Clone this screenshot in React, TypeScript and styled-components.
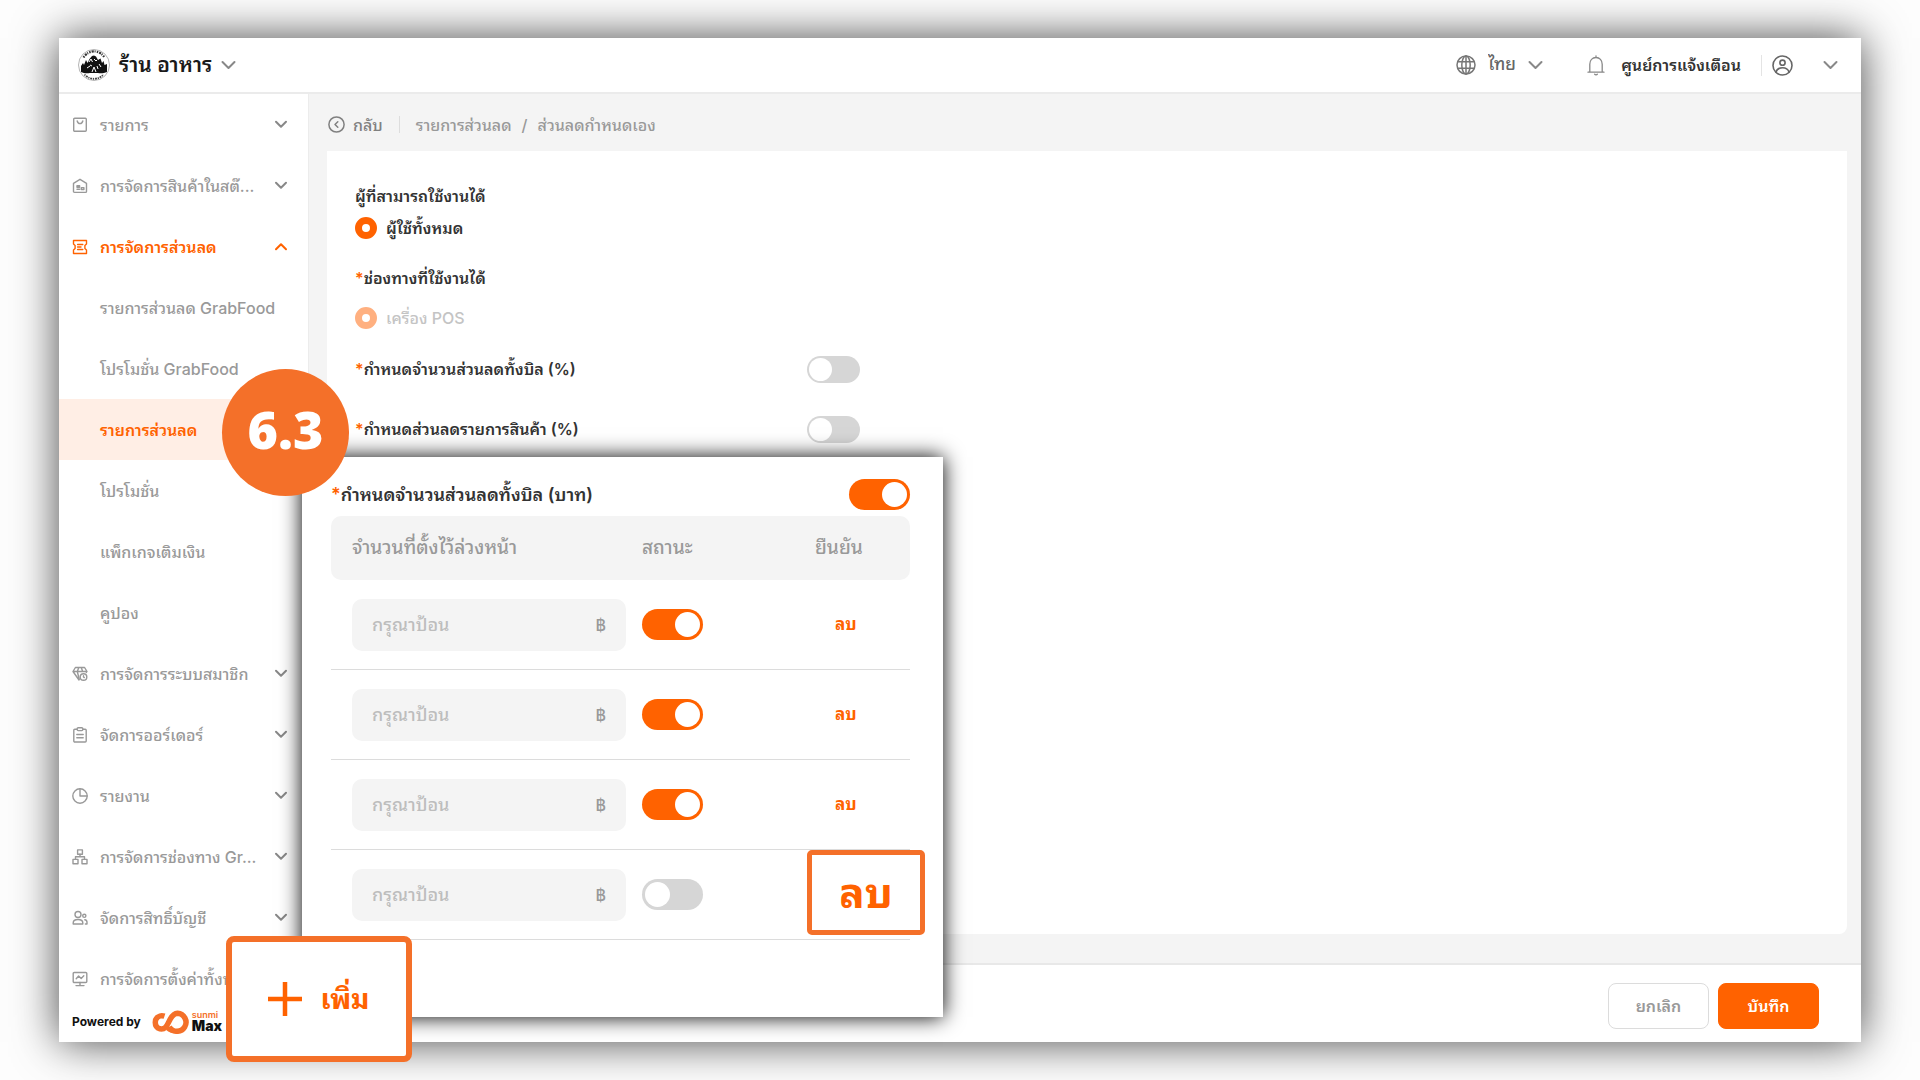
import React from "react";
import styled, { createGlobalStyle } from "styled-components";

const ORANGE = "#ff6200";
const MARK = "#f47029";
const GREY = "#999";
const FONT = `Inter, "Noto Sans Thai Looped", Loma, "Noto Sans Thai", "Noto Sans", "Liberation Sans", sans-serif`;

const Global = createGlobalStyle`
  * { box-sizing: border-box; }
  body { margin: 0; background: #fdfdfd; font-family: ${FONT}; line-height: 1.5; color: #333; }
  button, input, select { font: inherit; color: inherit; }
  button { background: none; border: 0; padding: 0; cursor: pointer; }
  a { color: inherit; text-decoration: none; }
  svg { display: block; flex: none; }
`;

const Stage = styled.div`
  position: relative;
  min-height: 100vh;
  padding: 38px 59px;
  display: flex;
  overflow: hidden;
`;

const Window = styled.div`
  flex: 1;
  display: flex;
  flex-direction: column;
  background: #fff;
  box-shadow: 0 0 42px rgba(0, 0, 0, 0.72);
`;

const Header = styled.header`
  height: 56px;
  border-bottom: 2px solid #ebebeb;
  padding: 0 23px 0 19px;
  display: flex;
  align-items: center;
  justify-content: space-between;
`;

const Store = styled.button`
  display: flex;
  align-items: center;
  gap: 9px;
  font-size: 21px;
  font-weight: 600;
  color: #1a1a1a;
`;

const HeaderTools = styled.div`
  display: flex;
  align-items: center;
  color: #777;
`;

const Language = styled.label`
  display: flex;
  align-items: center;
  gap: 12px;
  margin-right: 44px;
`;

const LanguageSelect = styled.select`
  appearance: none;
  border: 0;
  background: none;
  padding: 0;
  font-size: 17px;
  font-weight: 500;
  color: #666;
`;

const Notice = styled.button`
  display: flex;
  align-items: center;
  gap: 16px;
  font-size: 16px;
  font-weight: 600;
  color: #333;
`;

const Account = styled.button`
  display: flex;
  align-items: center;
  gap: 30px;
  margin-left: 20px;
  padding-left: 10px;
  border-left: 1px solid #e4e4e4;
  color: #666;
`;

const Body = styled.div`
  flex: 1;
  display: flex;
`;

const Sidebar = styled.nav`
  width: 250px;
  flex: none;
  display: flex;
  flex-direction: column;
  border-right: 1px solid #ececec;
`;

const MenuItem = styled.button<{ $open?: boolean }>`
  height: 61px;
  width: 100%;
  display: grid;
  grid-template-columns: 16px 1fr 14px;
  column-gap: 12px;
  align-items: center;
  padding: 0 20px 0 13px;
  text-align: left;
  white-space: nowrap;
  font-size: 16px;
  font-weight: ${(p) => (p.$open ? 600 : 500)};
  color: ${(p) => (p.$open ? ORANGE : GREY)};
`;

const SubLink = styled.a<{ $active?: boolean }>`
  height: 61px;
  display: flex;
  align-items: center;
  padding-left: 41px;
  font-size: 16px;
  font-weight: ${(p) => (p.$active ? 600 : 500)};
  color: ${(p) => (p.$active ? ORANGE : GREY)};
  background: ${(p) => (p.$active ? "#ffeee5" : "none")};
`;

const Powered = styled.div`
  display: flex;
  align-items: center;
  gap: 9px;
  padding-left: 13px;
  height: 25px;
  font-size: 12px;
  font-weight: 700;
  color: #111;
`;

const Brand = styled.span`
  display: flex;
  align-items: center;
  gap: 2px;
`;

const BrandName = styled.span`
  display: flex;
  flex-direction: column;
  font-size: 14px;
  line-height: 14px;
  font-weight: 900;
`;

const BrandTop = styled.span`
  font-size: 9px;
  line-height: 8px;
  font-weight: 600;
  color: ${MARK};
`;

const Main = styled.main`
  flex: 1;
  display: flex;
  flex-direction: column;
  background: #f4f4f4;
`;

const Crumbs = styled.div`
  height: 57px;
  padding: 4px 19px 0;
  display: flex;
  align-items: center;
  gap: 10px;
  font-size: 16px;
  font-weight: 500;
  color: ${GREY};
`;

const Back = styled.a`
  display: flex;
  align-items: center;
  gap: 8px;
  padding-right: 16px;
  margin-right: 6px;
  border-right: 1px solid #ddd;
  line-height: 16px;
  color: #808080;
`;

const Card = styled.section`
  flex: 1;
  margin: 0 14px 29px 18px;
  padding: 30px 28px;
  background: #fff;
  border-radius: 0 0 8px 8px;
  font-size: 16px;
  font-weight: 600;
`;

const Group = styled.fieldset`
  border: 0;
  margin: 0 0 18px;
  padding: 0;

  & + & {
    margin: 0;
  }
`;

const Legend = styled.legend`
  padding: 0;
  height: 30px;
  line-height: 30px;
`;

const Star = styled.span`
  color: ${ORANGE};
`;

const RadioLabel = styled.label<{ $off?: boolean }>`
  display: flex;
  align-items: center;
  gap: 9px;
  height: ${(p) => (p.$off ? 50 : 34)}px;
  font-weight: ${(p) => (p.$off ? 500 : 600)};
  color: ${(p) => (p.$off ? "#c4c4c4" : "#333")};
`;

const Radio = styled.input`
  appearance: none;
  margin: 0;
  width: 22px;
  height: 22px;
  border: 7px solid ${ORANGE};
  border-radius: 50%;
  background: #fff;

  &:disabled {
    border-color: #ffb080;
  }
`;

const SettingRow = styled.div`
  max-width: 505px;
  height: 52px;
  margin-bottom: 8px;
  display: flex;
  align-items: center;
  justify-content: space-between;
`;

const Switch = styled.input<{ $large?: boolean }>`
  appearance: none;
  display: flex;
  align-items: center;
  margin: 0;
  padding: ${(p) => (p.$large ? 3 : 2)}px;
  width: ${(p) => (p.$large ? 61 : 53)}px;
  height: ${(p) => (p.$large ? 31 : 27)}px;
  border-radius: 16px;
  background: #d6d6d6;
  cursor: pointer;

  &::before {
    content: "";
    height: 100%;
    aspect-ratio: 1;
    border-radius: 50%;
    background: #fff;
  }

  &:checked {
    justify-content: flex-end;
    background: ${ORANGE};
  }
`;

const Footer = styled.footer`
  height: 79px;
  padding: 4px 42px 0;
  border-top: 2px solid #e8e8e8;
  background: #fff;
  display: flex;
  align-items: center;
  justify-content: flex-end;
  gap: 9px;
`;

const ActionButton = styled.button<{ $primary?: boolean }>`
  width: 101px;
  height: 46px;
  border-radius: 8px;
  border: 1px solid ${(p) => (p.$primary ? ORANGE : "#dcdcdc")};
  background: ${(p) => (p.$primary ? ORANGE : "#fff")};
  color: ${(p) => (p.$primary ? "#fff" : GREY)};
  font-size: 16px;
  font-weight: 600;
`;

const Popup = styled.section`
  position: absolute;
  left: 302px;
  top: 457px;
  width: 641px;
  height: 560px;
  padding: 15px 33px 0 29px;
  background: #fff;
  box-shadow: 0 0 20px #000;
`;

const PopupHead = styled.div`
  height: 44px;
  display: flex;
  align-items: center;
  justify-content: space-between;
  font-size: 18px;
  font-weight: 600;
`;

const Table = styled.table`
  width: 100%;
  table-layout: fixed;
  border-collapse: separate;
  border-spacing: 0;
  font-size: 18px;
  font-weight: 500;
`;

const HeadCell = styled.th<{ $width?: number }>`
  width: ${(p) => (p.$width ? `${p.$width}px` : "auto")};
  height: 64px;
  padding: 0;
  text-align: left;
  font-size: 19px;
  font-weight: 500;
  color: ${GREY};
  background: #f4f4f4;

  &:first-child {
    padding-left: 21px;
    border-radius: 10px 0 0 10px;
  }

  &:last-child {
    border-radius: 0 10px 10px 0;
  }
`;

const Cell = styled.td`
  height: 90px;
  padding: 0;
  border-bottom: 1px solid #dcdcdc;

  &:first-child {
    padding: 0 16px 0 21px;
  }

  &:last-child {
    padding-left: 20px;
  }
`;

const Field = styled.label`
  height: 52px;
  padding: 0 20px;
  border-radius: 10px;
  background: #f4f4f4;
  display: flex;
  align-items: center;
  color: ${GREY};
`;

const FieldInput = styled.input`
  flex: 1;
  min-width: 0;
  height: 52px;
  padding: 0;
  border: 0;
  outline: 0;
  background: none;

  &::placeholder {
    color: #bdbdbd;
    opacity: 1;
  }
`;

const Unit = styled.span`
  font-size: 16px;
`;

const DeleteButton = styled.button`
  display: block;
  font-size: 17px;
  font-weight: 700;
  color: ${ORANGE};
`;

const Callout = styled.button`
  position: absolute;
  display: flex;
  align-items: center;
  justify-content: center;
  background: #fff;
  color: ${ORANGE};
  font-weight: 700;
`;

const AddCallout = styled(Callout)`
  left: 226px;
  top: 936px;
  width: 186px;
  height: 126px;
  gap: 18px;
  border: 6px solid ${MARK};
  border-radius: 8px;
  font-size: 28px;
`;

const DeleteCallout = styled(Callout)`
  left: 807px;
  top: 850px;
  width: 118px;
  height: 85px;
  border: 5px solid ${MARK};
  border-radius: 5px;
  font-size: 42px;
`;

const StepBadge = styled.div`
  position: absolute;
  left: 222px;
  top: 369px;
  width: 127px;
  height: 127px;
  padding-bottom: 8px;
  border-radius: 50%;
  background: ${MARK};
  color: #fff;
  font-family: "Noto Sans", "Open Sans", sans-serif;
  font-size: 52px;
  font-weight: 900;
  display: flex;
  align-items: center;
  justify-content: center;
`;

const line = {
  fill: "none",
  stroke: "currentColor",
  strokeLinecap: "round" as const,
  strokeLinejoin: "round" as const,
};

const CHEVRON_COLOR = "#888";

function Chevron({ up }: { up?: boolean }) {
  return (
    <svg width="14" height="9" viewBox="0 0 14 9" {...line} stroke={up ? ORANGE : CHEVRON_COLOR} strokeWidth="2">
      <path d={up ? "M2 7.3 7 2.2l5 5.1" : "M2 1.7 7 6.8l5-5.1"} />
    </svg>
  );
}

function HeaderChevron() {
  return (
    <svg width="15" height="10" viewBox="0 0 15 10" {...line} stroke={CHEVRON_COLOR} strokeWidth="2">
      <path d="M1.500 2 7.500 8l6-6" />
    </svg>
  );
}

const ICONS: Record<string, React.ReactNode> = {
  bag: (
    <>
      <rect x="1.7" y="1.2" width="12.6" height="13" rx="1" />
      <path d="M5.2 4c.4 1.700 1.400 2.600 2.800 2.600s2.400-.9 2.800-2.600" />
    </>
  ),
  stock: (
    <>
      <path d="M1.500 5.400 8 1.300l6.500 4.100v8a1 1 0 0 1-1 1h-11a1 1 0 0 1-1-1z" />
      <path d="M5 7.800h2.600v1.400H5zM5 11.300h2.600M9.300 9.800h2.600v1.800H9.300z" />
    </>
  ),
  ticket: (
    <>
      <path d="M1.500 1.500h13v3.600l-1.600 1.500v2.800l1.600 1.500v3.600h-13v-3.600l1.600-1.500V6.600L1.500 5.100z" />
      <path d="M5.600 5.500h5.200M5.600 8h3.400M5.600 10.500h5.200" />
    </>
  ),
  member: (
    <>
      <path d="M7 14 1 5.500 3.400 1.500h9.200L15 5.500l-.6 1M1 5.500h14M5.300 5.500l2 8M5.300 5.500 6.800 1.500M10.700 5.500 9.200 1.500" />
      <circle cx="11.500" cy="11" r="3.300" fill="#fff" />
      <path d="M11.500 9.800v1.200l.8.6" />
    </>
  ),
  order: (
    <>
      <rect x="1.800" y="2.300" width="12.400" height="12.700" rx="1" />
      <rect x="5.200" y="0.800" width="5.600" height="2.800" rx="1" fill="#fff" />
      <path d="M4.800 7.500h6.400M4.800 10.800h6.400" />
    </>
  ),
  report: (
    <>
      <circle cx="8" cy="8" r="7.200" />
      <path d="M8 1v7h7" />
    </>
  ),
  channel: (
    <>
      <rect x="5.600" y="0.900" width="4.800" height="4.300" />
      <rect x="1" y="10.400" width="5" height="4.300" />
      <rect x="10" y="10.400" width="5" height="4.300" />
      <path d="M8 5.200v2.600M3.500 10.400V7.800h9v2.600" />
    </>
  ),
  users: (
    <>
      <circle cx="6" cy="4.500" r="3" />
      <path d="M1.200 14v-1c0-2.400 1.600-3.500 4.800-3.500s4.800 1.100 4.800 3.500v1z" />
      <circle cx="12.300" cy="5.800" r="1.600" />
      <path d="M12.800 9.800c1.500.2 2.200 1 2.200 2.500V14h-1.600" />
    </>
  ),
  settings: (
    <>
      <rect x="1.200" y="1.500" width="13.600" height="10" rx="1" />
      <path d="M4.200 7.800 6.600 5l2.600 2.600 2.600-2.800M8 11.500v3M4 14.600h8" />
    </>
  ),
};

function MenuIcon({ name }: { name: string }) {
  return (
    <svg width="16" height="16" viewBox="0 0 16 16" {...line} strokeWidth="1.400">
      {ICONS[name]}
    </svg>
  );
}

function StoreLogo() {
  return (
    <svg width="32" height="34" viewBox="0 0 32 34">
      <circle cx="16" cy="17" r="15.500" fill="#fff" stroke="#b4b4b4" strokeWidth="1" />
      <path
        d="M5.500 9.500C8 5.500 12 3.400 16 3.400s8 2.100 10.500 6.100"
        fill="none"
        stroke="#333"
        strokeWidth="2.200"
        strokeDasharray="1.500 1 2.200 .8 1 1.200"
      />
      <path
        d="M6.500 26.500c2.700 2.900 6 4.300 9.500 4.300s6.800-1.400 9.500-4.300"
        fill="none"
        stroke="#444"
        strokeWidth="1.800"
        strokeDasharray="1.200 .9 1.900 .8"
      />
      <path
        d="M3 24v-6l2-3 1 2 2-5 1.500 3 2-4L14 8l2-.500 2 1 2 3.500 2.500-1.500L24 15l1.500-2 1 4L29 16v8c-3 1.500-7 1.500-9 1H12c-3 .5-6 .5-9-1z"
        fill="#111"
      />
      <path
        d="M11 14l2-3 1.500 3M16 11l2 2 1-1M9 20l3-2M21 16l2 3M14 24l2-5 2 5M12 17l2 1M19 18l1 3"
        fill="none"
        stroke="#fff"
        strokeWidth="1"
      />
    </svg>
  );
}

function SunmiLogo() {
  return (
    <svg width="40" height="24" viewBox="0 0 40 24" fill="none" stroke={MARK} strokeWidth="5.500">
      <path d="M14.500 6.200C13 5.700 11.500 5.500 10 6A6.700 6.700 0 0 0 10 18.800c5 .8 6.500-2.300 8.500-6.300 2-4.500 4.500-9 9-9.200a9 9 0 1 1-8.300 13.500" />
      <path d="M17.500 18.500c2 1.700 4.500 2.700 8 2.700" strokeWidth="4" />
    </svg>
  );
}

function GlobeIcon() {
  return (
    <svg width="20" height="20" viewBox="0 0 20 20" {...line} strokeWidth="1.500">
      <circle cx="10" cy="10" r="9" />
      <ellipse cx="10" cy="10" rx="4.200" ry="9" />
      <path d="M1.800 6.800h16.400M1.800 13.200h16.400M10 1v18" />
    </svg>
  );
}

function BellIcon() {
  return (
    <svg width="18" height="21" viewBox="0 0 18 21" {...line} strokeWidth="1.300" stroke="#888">
      <path d="M1 17.200h16M2.800 17V9.200C2.800 5.200 5.400 2.500 9 2.500s6.200 2.700 6.200 6.700V17M9 2.400V.8M7.600 19.200c.6.800 2.200.8 2.800 0" />
    </svg>
  );
}

function UserIcon() {
  return (
    <svg width="21" height="21" viewBox="0 0 21 21" {...line} strokeWidth="1.600">
      <circle cx="10.500" cy="10.500" r="9.500" />
      <circle cx="10.500" cy="7.700" r="2.600" />
      <path d="M4 17c1-3 3.300-4.200 6.500-4.200S16 14 17 17" />
    </svg>
  );
}

function BackIcon() {
  return (
    <svg width="17" height="17" viewBox="0 0 17 17" {...line} strokeWidth="1.500">
      <circle cx="8.500" cy="8.500" r="7.600" />
      <path d="M9.800 5.800 7 8.500l2.800 2.700" />
    </svg>
  );
}

function PlusIcon() {
  return (
    <svg width="34" height="34" viewBox="0 0 34 34" fill="none" stroke="currentColor" strokeWidth="4.500">
      <path d="M17 0v34M0 17h34" />
    </svg>
  );
}

const TOP_MENU = [
  { icon: "bag", text: "รายการ" },
  { icon: "stock", text: "การจัดการสินค้าในสต๊..." },
  { icon: "ticket", text: "การจัดการส่วนลด", open: true },
];

const SUB_MENU = [
  "รายการส่วนลด GrabFood",
  "โปรโมชั่น GrabFood",
  "รายการส่วนลด",
  "โปรโมชั่น",
  "แพ็กเกจเติมเงิน",
  "คูปอง",
];

const BOTTOM_MENU = [
  { icon: "member", text: "การจัดการระบบสมาชิก" },
  { icon: "order", text: "จัดการออร์เดอร์" },
  { icon: "report", text: "รายงาน" },
  { icon: "channel", text: "การจัดการช่องทาง Gr..." },
  { icon: "users", text: "จัดการสิทธิ์บัญชี" },
  { icon: "settings", text: "การจัดการตั้งค่าทั้งห..." },
];

const PRESETS = [
  { id: 1, on: true },
  { id: 2, on: true },
  { id: 3, on: true },
  { id: 4, on: false },
];

function Menu({ items }: { items: { icon: string; text: string; open?: boolean }[] }) {
  return (
    <>
      {items.map((item) => (
        <MenuItem key={item.text} $open={item.open} aria-expanded={!!item.open}>
          <MenuIcon name={item.icon} />
          <span>{item.text}</span>
          <Chevron up={item.open} />
        </MenuItem>
      ))}
    </>
  );
}

export default function App() {
  return (
    <>
      <Global />
      <Stage>
        <Window>
          <Header>
            <Store>
              <StoreLogo />
              <span>ร้าน อาหาร</span>
              <HeaderChevron />
            </Store>
            <HeaderTools>
              <Language>
                <GlobeIcon />
                <LanguageSelect aria-label="ภาษา">
                  <option>ไทย</option>
                </LanguageSelect>
                <HeaderChevron />
              </Language>
              <Notice>
                <BellIcon />
                <span>ศูนย์การแจ้งเตือน</span>
              </Notice>
              <Account aria-label="บัญชี">
                <UserIcon />
                <HeaderChevron />
              </Account>
            </HeaderTools>
          </Header>

          <Body>
            <Sidebar>
              <Menu items={TOP_MENU} />
              {SUB_MENU.map((text) => (
                <SubLink key={text} href="#" $active={text === "รายการส่วนลด"}>
                  {text}
                </SubLink>
              ))}
              <Menu items={BOTTOM_MENU} />
              <Powered>
                <span>Powered by</span>
                <Brand>
                  <SunmiLogo />
                  <BrandName>
                    <BrandTop>sunmi</BrandTop>
                    Max
                  </BrandName>
                </Brand>
              </Powered>
            </Sidebar>

            <Main>
              <Crumbs>
                <Back href="#">
                  <BackIcon />
                  กลับ
                </Back>
                <a href="#">รายการส่วนลด</a>
                <span>/</span>
                <span>ส่วนลดกำหนดเอง</span>
              </Crumbs>
              <Card>
                <Group>
                  <Legend>ผู้ที่สามารถใช้งานได้</Legend>
                  <RadioLabel>
                    <Radio type="radio" name="audience" defaultChecked />
                    ผู้ใช้ทั้งหมด
                  </RadioLabel>
                </Group>
                <Group>
                  <Legend>
                    <Star>*</Star>ช่องทางที่ใช้งานได้
                  </Legend>
                  <RadioLabel $off>
                    <Radio type="radio" name="channel" defaultChecked disabled />
                    เครื่อง POS
                  </RadioLabel>
                </Group>
                <SettingRow>
                  <label htmlFor="bill-percent">
                    <Star>*</Star>กำหนดจำนวนส่วนลดทั้งบิล (%)
                  </label>
                  <Switch type="checkbox" role="switch" id="bill-percent" />
                </SettingRow>
                <SettingRow>
                  <label htmlFor="item-percent">
                    <Star>*</Star>กำหนดส่วนลดรายการสินค้า (%)
                  </label>
                  <Switch type="checkbox" role="switch" id="item-percent" />
                </SettingRow>
              </Card>
              <Footer>
                <ActionButton>ยกเลิก</ActionButton>
                <ActionButton $primary>บันทึก</ActionButton>
              </Footer>
            </Main>
          </Body>
        </Window>

        <Popup>
          <PopupHead>
            <label htmlFor="bill-baht">
              <Star>*</Star>กำหนดจำนวนส่วนลดทั้งบิล (บาท)
            </label>
            <Switch type="checkbox" role="switch" id="bill-baht" $large defaultChecked />
          </PopupHead>
          <Table>
            <thead>
              <tr>
                <HeadCell $width={311}>จำนวนที่ตั้งไว้ล่วงหน้า</HeadCell>
                <HeadCell $width={173}>สถานะ</HeadCell>
                <HeadCell>ยืนยัน</HeadCell>
              </tr>
            </thead>
            <tbody>
              {PRESETS.map((row) => (
                <tr key={row.id}>
                  <Cell>
                    <Field>
                      <FieldInput type="text" placeholder="กรุณาป้อน" />
                      <Unit>฿</Unit>
                    </Field>
                  </Cell>
                  <Cell>
                    <Switch type="checkbox" role="switch" aria-label="สถานะ" $large defaultChecked={row.on} />
                  </Cell>
                  <Cell>{row.on && <DeleteButton>ลบ</DeleteButton>}</Cell>
                </tr>
              ))}
            </tbody>
          </Table>
        </Popup>

        <AddCallout>
          <PlusIcon />
          เพิ่ม
        </AddCallout>
        <DeleteCallout>ลบ</DeleteCallout>
        <StepBadge>6.3</StepBadge>
      </Stage>
    </>
  );
}
